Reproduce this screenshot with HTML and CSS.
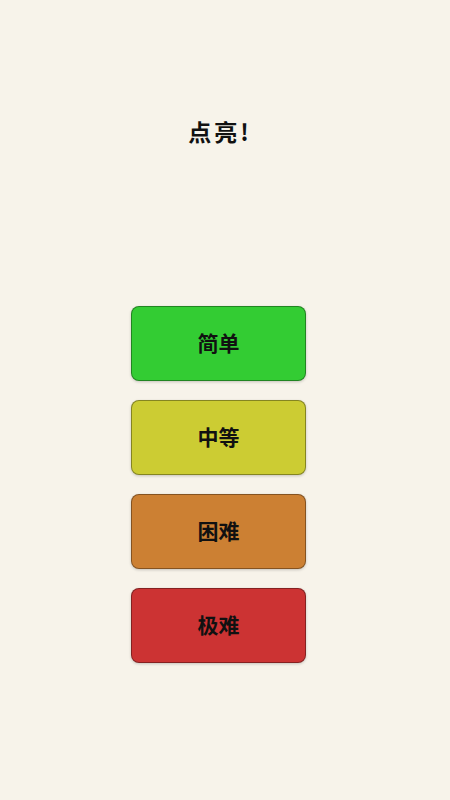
FILE: index.html
```html
<!DOCTYPE html>
<html lang="zh-CN">

<head>
    <meta charset="UTF-8">
    <meta name="viewport" content="width=device-width, initial-scale=1.0">
    <title>点亮!</title>

    <link rel="stylesheet" href="styles.css">
</head>

<body>
    <div id="app">
        <h1 class="titulo">点亮!</h1>

        <div class="niveis">
            <button class="nivel facil">简单</button>
            <button class="nivel medio">中等</button>
            <button class="nivel dificil">困难</button>
            <button class="nivel extremo">极难</button>
        </div>
    </div>
</body>

</html>
```

FILE: styles.css
```css
* {
    padding: 0;
    margin: 0;
    box-sizing: border-box;
}

body {
    background-color: #f7f3ea;
    font-family: "Noto Sans CJK SC", "Noto Sans", sans-serif;
}

#app {
    width: 437px;
    height: 800px;
    display: flex;
    flex-direction: column;
    align-items: center;
}

.titulo {
    margin-top: 115px;
    padding-left: 3px;
    font-size: 23px;
    line-height: 32px;
    letter-spacing: 3px;
    font-weight: 700;
    color: #111;
}

.niveis {
    margin-top: 159px;
    display: flex;
    flex-direction: column;
    gap: 19px;
}

.nivel {
    width: 175px;
    height: 75px;
    padding-bottom: 3px;
    border-radius: 8px;
    border: 1px solid rgba(0, 0, 0, 0.35);
    box-shadow: 0px 1px 3px rgba(0, 0, 0, 0.2);
    font-family: inherit;
    font-size: 21px;
    font-weight: 700;
    color: #111;
}

.facil {
    background-color: #33cc33;
}

.medio {
    background-color: #cccc33;
}

.dificil {
    background-color: #cc8033;
}

.extremo {
    background-color: #cc3333;
}
```
